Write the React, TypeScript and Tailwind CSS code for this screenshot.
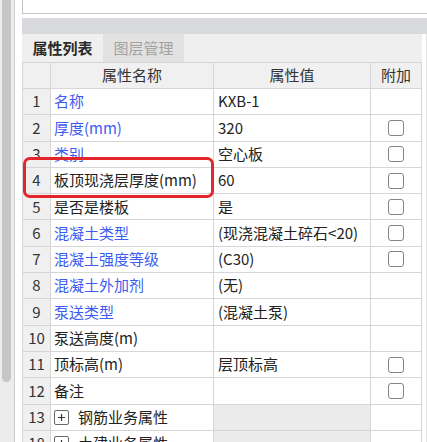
type Row = {
  n: number;
  name: string;
  blue?: boolean;
  value?: string;
  check?: boolean;
  group?: boolean;
};

const rows: Row[] = [
  { n: 1, name: '名称', blue: true, value: 'KXB-1' },
  { n: 2, name: '厚度(mm)', blue: true, value: '320', check: true },
  { n: 3, name: '类别', blue: true, value: '空心板', check: true },
  { n: 4, name: '板顶现浇层厚度(mm)', value: '60', check: true },
  { n: 5, name: '是否是楼板', value: '是', check: true },
  { n: 6, name: '混凝土类型', blue: true, value: '(现浇混凝土碎石<20)', check: true },
  { n: 7, name: '混凝土强度等级', blue: true, value: '(C30)', check: true },
  { n: 8, name: '混凝土外加剂', blue: true, value: '(无)' },
  { n: 9, name: '泵送类型', blue: true, value: '(混凝土泵)' },
  { n: 10, name: '泵送高度(m)', value: '' },
  { n: 11, name: '顶标高(m)', value: '层顶标高', check: true },
  { n: 12, name: '备注', value: '', check: true },
  { n: 13, name: '钢筋业务属性', group: true },
  { n: 18, name: '土建业务属性', group: true },
];

const Checkbox = () => (
  <div className="w-[16px] h-[16px] rounded-[3px] border border-[#858585] bg-white" />
);

const PlusBox = () => (
  <div className="w-[15px] h-[15px] rounded-[2px] border border-[#6a6a6a] bg-white flex items-center justify-center">
    <svg width="9" height="9" viewBox="0 0 9 9">
      <path d="M4.5 1v7M1 4.5h7" stroke="#333" strokeWidth="1.2" />
    </svg>
  </div>
);

export default function App() {
  return (
    <div
      className="relative w-[427px] h-[442px] overflow-hidden bg-white flex text-[15px] text-[#222]"
      style={{ fontFamily: '"Noto Sans CJK SC", "Noto Sans", sans-serif' }}
    >
      {/* left scrollbar */}
      <div className="w-[15px] shrink-0 bg-[#ececec] border-r border-[#cfcfcf]">
        <div className="ml-[2px] w-[9px] h-[382px] rounded-b-[5px] bg-[#c6c6c6]" />
      </div>
      <div className="w-[7px] shrink-0" />

      <div className="flex-1 flex flex-col">
        <div className="h-[14px] border-l border-b border-[#c4c4c4] bg-white shrink-0" />
        <div className="h-[16px] mt-[4px] bg-[#d9dadd] shrink-0" />

        <div className="flex flex-1">
          <div className="w-[400px] shrink-0 flex flex-col">
            {/* tabs */}
            <div className="h-[28px] bg-[#efefef] flex shrink-0">
              <div className="w-[81px] flex items-center justify-center font-bold text-[#2a2a2a]">属性列表</div>
              <div className="w-[81px] flex items-center justify-center bg-[#e2e2e2] text-[#a2a2a2]">图层管理</div>
            </div>

            {/* header */}
            <div className="flex h-[27px] border-t border-b border-l border-[#d6d6d6] bg-[#f0f0f0] text-[#333] shrink-0">
              <div className="w-[28px] border-r border-[#d6d6d6]" />
              <div className="w-[163px] border-r border-[#d6d6d6] flex items-center justify-center">属性名称</div>
              <div className="w-[157px] border-r border-[#d6d6d6] flex items-center justify-center">属性值</div>
              <div className="w-[51px] border-r border-[#d6d6d6] flex items-center justify-center">附加</div>
            </div>

            {rows.map((r) => (
              <div key={r.n} className="flex h-[26.3px] border-b border-l border-[#d6d6d6] shrink-0">
                <div className="w-[28px] border-r border-[#d6d6d6] bg-[#f0f0f0] flex items-center justify-center text-[#333]">
                  {r.n}
                </div>
                <div className="w-[163px] border-r border-[#d6d6d6] flex items-center pl-[3px] whitespace-nowrap overflow-hidden">
                  {r.group ? (
                    <div className="flex items-center gap-[9px]">
                      <PlusBox />
                      <span>{r.name}</span>
                    </div>
                  ) : (
                    <span className={r.blue ? 'text-[#3c5cf2]' : 'text-[#222]'}>{r.name}</span>
                  )}
                </div>
                <div
                  className={`w-[157px] border-r border-[#d6d6d6] flex items-center pl-[4px] whitespace-nowrap overflow-hidden ${
                    r.group ? 'bg-[#ebebeb]' : 'bg-white'
                  }`}
                >
                  {r.value}
                </div>
                <div className="w-[51px] border-r border-[#d6d6d6] flex items-center justify-center">
                  {r.check && <Checkbox />}
                </div>
              </div>
            ))}
          </div>
          <div className="flex-1 bg-white border-r border-[#e4e4e4]" />
        </div>
      </div>

      {/* highlight */}
      <div className="absolute left-[23px] top-[157px] w-[191px] h-[41px] border-[3px] border-[#e3262b] rounded-[7px]" />
    </div>
  );
}
